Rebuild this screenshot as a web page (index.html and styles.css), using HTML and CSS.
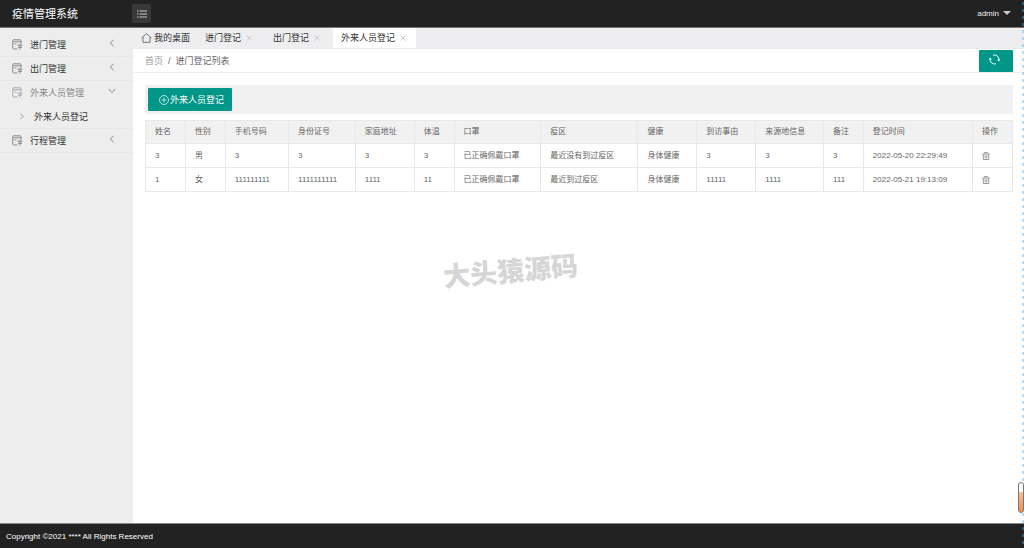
FILE: index.html
```html
<!DOCTYPE html>
<html lang="zh-CN">
<head>
<meta charset="utf-8">
<title>疫情管理系统</title>
<link rel="stylesheet" href="styles.css">
</head>
<body>
<svg class="defs" aria-hidden="true">
  <symbol id="doc" viewBox="0 0 11 11"><path d="M9 5V1.500Q9 .8 8.300.8H1.500Q.8.800.8 1.500V9.300Q.8 10 1.500 10H5.500M1 2.800H9M2.500 5H4.500M5.500 6.200H10.500M8 5.200V10.500M6 8.300H10"/></symbol>
  <symbol id="left" viewBox="0 0 6 8"><path d="M4.700 1 1.200 4 4.700 7"/></symbol>
  <symbol id="right" viewBox="0 0 6 8"><path d="M1.300 1 4.300 4 1.300 7"/></symbol>
  <symbol id="down" viewBox="0 0 8 6"><path d="M.8 1 4 4.500 7.200 1"/></symbol>
  <symbol id="close" viewBox="0 0 6 6"><path d="M.5.500 5.500 5.500M5.500.500.500 5.500"/></symbol>
  <symbol id="trash" viewBox="0 0 8 8"><path d="M0 2H8M2.500 1.800V.500H5.500V1.800M1.300 2.500V7.500H6.700V2.500M3.200 3.200V6.500M4.800 3.200V6.500"/></symbol>
</svg>
<header class="topbar">
  <h1 class="brand">疫情管理系统</h1>
  <button class="toggle" aria-label="折叠菜单"><svg class="icon" width="10" height="8" viewBox="0 0 10 8"><path d="M0 1H1.500M2.500 1H10M0 4H1.500M2.500 4H10M0 7H1.500M2.500 7H10"/></svg></button>
  <button class="account">admin <span class="caret"></span></button>
</header>
<div class="body">
  <nav class="sidebar">
    <a class="item" href="#"><svg class="icon doc"><use href="#doc"/></svg><span class="label">进门管理</span><svg class="icon arrow"><use href="#left"/></svg></a>
    <a class="item" href="#"><svg class="icon doc"><use href="#doc"/></svg><span class="label">出门管理</span><svg class="icon arrow"><use href="#left"/></svg></a>
    <a class="item open" href="#"><svg class="icon doc"><use href="#doc"/></svg><span class="label">外来人员管理</span><svg class="icon arrow"><use href="#down"/></svg></a>
    <a class="item sub" href="#"><svg class="icon point"><use href="#right"/></svg><span class="label">外来人员登记</span></a>
    <a class="item" href="#"><svg class="icon doc"><use href="#doc"/></svg><span class="label">行程管理</span><svg class="icon arrow"><use href="#left"/></svg></a>
  </nav>
  <main class="main">
    <div class="tabs">
      <div class="tab home"><svg class="icon" width="11" height="10" viewBox="0 0 11 10"><path d="M.5 5 5.500.700 10.500 5M2 4V9.300H9V4"/></svg><a href="#">我的桌面</a></div>
      <div class="tab"><a href="#">进门登记</a><button class="close" aria-label="关闭"><svg class="icon"><use href="#close"/></svg></button></div>
      <div class="tab"><a href="#">出门登记</a><button class="close" aria-label="关闭"><svg class="icon"><use href="#close"/></svg></button></div>
      <div class="tab active"><a href="#">外来人员登记</a><button class="close" aria-label="关闭"><svg class="icon"><use href="#close"/></svg></button></div>
    </div>
    <div class="crumbs">
      <a class="first" href="#">首页</a><span class="slash">/</span><a href="#">进门登记列表</a>
      <button class="refresh" aria-label="刷新"><svg class="icon" width="11" height="11" viewBox="0 0 11 11"><path d="M4 1.200A4.500 4.500 0 0 1 9.800 6.500M8.500 5.800 9.800 7 10.700 5.500M7 9.800A4.500 4.500 0 0 1 1.200 4.500M.300 5.500 1.200 4 2.500 5.200"/></svg></button>
    </div>
    <section class="content">
      <div class="toolbar">
        <button class="add"><svg class="icon" width="10" height="10" viewBox="0 0 10 10"><circle cx="5" cy="5" r="4.500"/><path d="M5 2.500V7.500M2.500 5H7.500"/></svg>外来人员登记</button>
      </div>
      <table class="grid">
        <colgroup><col class="c-s"><col class="c-s"><col class="c-phone"><col class="c-id"><col class="c-m"><col class="c-s"><col class="c-mask"><col class="c-area"><col class="c-m"><col class="c-m"><col class="c-from"><col class="c-s"><col class="c-time"><col class="c-s"></colgroup>
        <thead><tr><th>姓名</th><th>性别</th><th>手机号码</th><th>身份证号</th><th>家庭地址</th><th>体温</th><th>口罩</th><th>疫区</th><th>健康</th><th>到访事由</th><th>来源地信息</th><th>备注</th><th>登记时间</th><th>操作</th></tr></thead>
        <tbody>
          <tr><td>3</td><td>男</td><td>3</td><td>3</td><td>3</td><td>3</td><td>已正确佩戴口罩</td><td>最近没有到过疫区</td><td>身体健康</td><td>3</td><td>3</td><td>3</td><td>2022-05-20 22:29:49</td><td><button class="delete" aria-label="删除"><svg class="icon"><use href="#trash"/></svg></button></td></tr>
          <tr><td>1</td><td>女</td><td>111111111</td><td>1111111111</td><td>1111</td><td>11</td><td>已正确佩戴口罩</td><td>最近到过疫区</td><td>身体健康</td><td>11111</td><td>1111</td><td>111</td><td>2022-05-21 19:13:09</td><td><button class="delete" aria-label="删除"><svg class="icon"><use href="#trash"/></svg></button></td></tr>
        </tbody>
      </table>
    </section>
  </main>
</div>
<footer class="footer">Copyright ©2021 **** All Rights Reserved</footer>
<div class="watermark">大头猿源码</div>
<div class="edge"></div>
<div class="gauge"></div>
</body>
</html>
```
FILE: styles.css
```css
* { box-sizing: border-box; }
body {
  margin: 0;
  min-height: 100vh;
  display: flex;
  flex-direction: column;
  position: relative;
  overflow: hidden;
  background: #fff;
  color: #333;
  font: 9px/12px "Liberation Sans", "Noto Sans CJK SC", sans-serif;
}
a { color: inherit; text-decoration: none; }
button { font: inherit; color: inherit; border: 0; padding: 0; background: none; cursor: pointer; }
.defs { position: absolute; width: 0; height: 0; }
.icon { display: block; flex: none; fill: none; stroke: currentColor; stroke-width: 1; }

.topbar {
  height: 28px;
  display: flex;
  align-items: center;
  background: #222;
  border-bottom: 1px solid #777;
  color: #fff;
}
.brand { width: 132px; margin: 0; padding-left: 12px; font-size: 11px; font-weight: 400; line-height: 16px; }
.toggle {
  width: 19px;
  height: 19px;
  display: grid;
  place-items: center;
  border-radius: 2px;
  background: #393939;
  color: #ccc;
}
.account { display: flex; align-items: center; gap: 4px; margin: 0 13px 0 auto; color: #eee; font-size: 8px; }
.caret { margin-bottom: 2px; border: 4px solid transparent; border-top-color: #ccc; border-bottom: 0; }

.body { flex: 1; display: flex; }
.sidebar { width: 133px; flex: none; padding-top: 5px; background: #ededed; }
.item { height: 24px; display: flex; align-items: center; padding: 0 17px 0 12px; border-bottom: 1px solid #e6e6e6; }
.doc { width: 11px; height: 11px; color: #888; }
.item .label { margin-left: 7px; }
.arrow { width: 8px; height: 8px; margin: 0 0 3px auto; color: #888; }
.open { color: #888; border-bottom-color: transparent; }
.open .doc { color: #aaa; }
.sub { padding-left: 18px; }
.sub .label { margin-left: 8px; }
.point { width: 8px; height: 7px; color: #888; }

.main { flex: 1; min-width: 0; }
.tabs { height: 21px; display: flex; background: #eeeef0; border-bottom: 1px solid #eaeaea; }
.tab { display: flex; align-items: center; gap: 5px; padding: 0 13px 0 8px; }
.tab.home { gap: 2px; padding-right: 7px; }
.tab.home .icon { color: #777; }
.tab.active { padding-right: 10px; background: #fff; }
.close .icon { width: 6px; height: 6px; color: #ccc; }
.crumbs {
  height: 24px;
  display: flex;
  align-items: center;
  padding: 0 11px 0 12px;
  border-bottom: 1px solid #eee;
  color: #666;
}
.first { color: #999; }
.slash { margin: 0 5px; }
.refresh { width: 34px; height: 22px; display: grid; place-items: center; margin-left: auto; padding: 0 3px 3px 0; border-radius: 1px; background: #009688; color: #fff; }
.content { padding: 12px 11px 0 12px; }
.toolbar { padding: 3px; background: #f1f1f1; margin-bottom: 6px; }
.add { height: 23px; display: flex; align-items: center; gap: 1px; padding: 0 8px 0 11px; border-radius: 1px; background: #009688; color: #fff; }
.add .icon { color: #b5e0db; }

.grid { width: 100%; table-layout: fixed; border-collapse: collapse; color: #666; font-size: 8px; }
.grid th, .grid td { height: 24px; padding: 0 0 0 9px; border: 1px solid #e8e8e8; text-align: left; font-weight: 400; white-space: nowrap; }
.grid th { height: 23px; background: #f1f1f1; }
.c-s { width: 4.6%; }
.c-m { width: 6.8%; }
.c-phone { width: 7.3%; }
.c-id { width: 7.7%; }
.c-mask { width: 10%; }
.c-area { width: 11.2%; }
.c-from { width: 7.8%; }
.c-time { width: 12.6%; }
.delete { display: block; }
.delete .icon { width: 8px; height: 8px; color: #999; }

.footer { height: 25px; padding: 7px 6px 5px; background: #222; border-top: 1px solid #888; color: #fff; font-size: 8px; }

.watermark {
  position: absolute;
  left: 443px;
  top: 250px;
  transform: rotate(-5deg);
  color: #d6d6d6;
  font: 900 27px/40px "Noto Sans CJK SC", sans-serif;
  pointer-events: none;
}
.edge {
  position: absolute;
  right: 0;
  top: 2px;
  bottom: 0;
  width: 2px;
  background: repeating-linear-gradient(#39b0ff66 0 3px, transparent 3px 7px);
  pointer-events: none;
}
.gauge {
  position: absolute;
  right: 0;
  bottom: 35px;
  width: 6px;
  height: 31px;
  border: 1px solid #777;
  border-radius: 3px;
  background: linear-gradient(#fff 30%, #fbc08c 32%, #f08a50);
}
```
